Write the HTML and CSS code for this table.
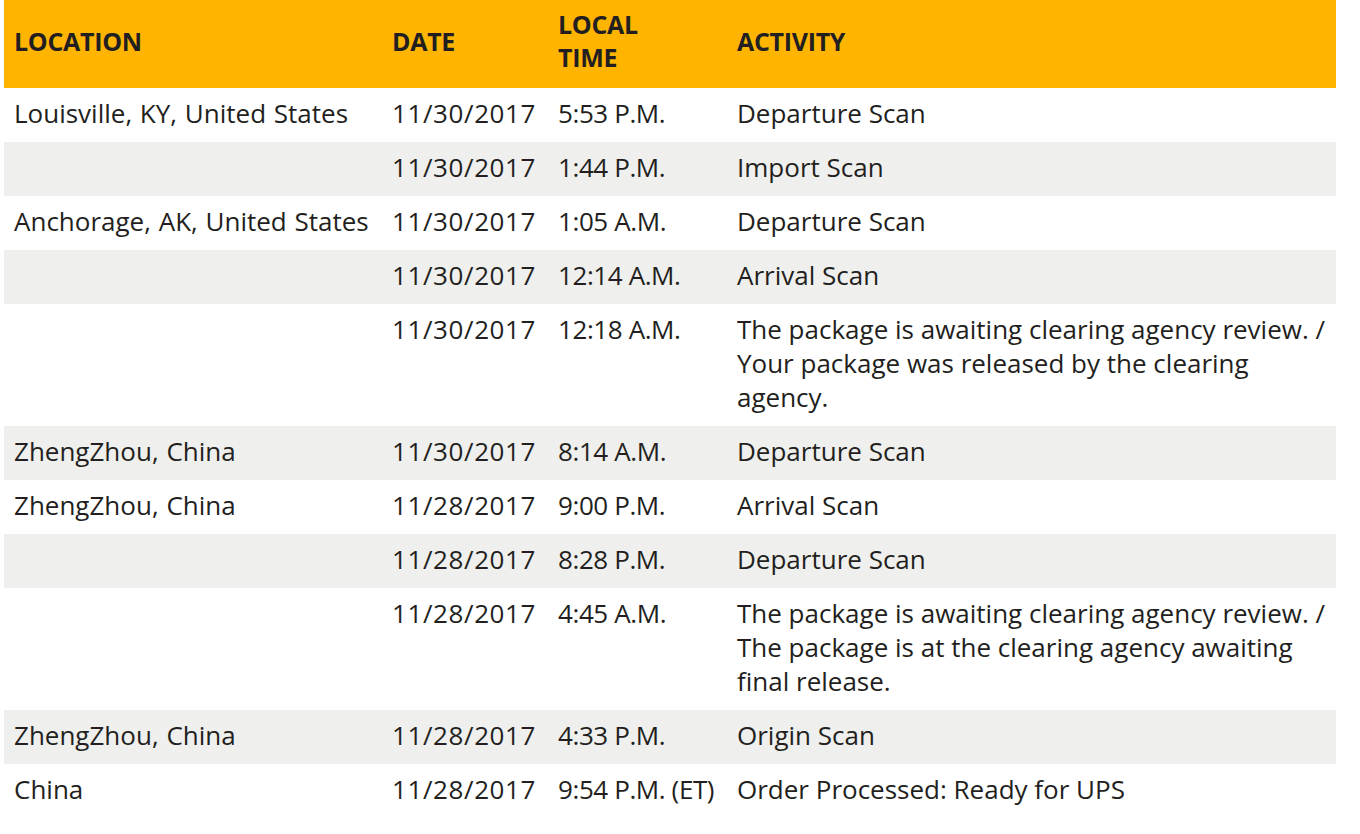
FILE: index.html
```html
<!DOCTYPE html>
<html lang="en">
<head>
<meta charset="utf-8">
<title>Shipment Progress</title>
<link rel="stylesheet" href="styles.css">
</head>
<body>
<table class="progress">
  <colgroup>
    <col class="c-loc"><col class="c-date"><col class="c-time"><col class="c-act">
  </colgroup>
  <thead>
    <tr>
      <th>LOCATION</th>
      <th>DATE</th>
      <th>LOCAL<br>TIME</th>
      <th>ACTIVITY</th>
    </tr>
  </thead>
  <tbody>
    <tr><td class="loc">Louisville, KY, United States</td><td class="date">11/30/2017</td><td class="time">5:53 P.M.</td><td>Departure Scan</td></tr>
    <tr><td class="loc"></td><td class="date">11/30/2017</td><td class="time">1:44 P.M.</td><td>Import Scan</td></tr>
    <tr><td class="loc">Anchorage, AK, United States</td><td class="date">11/30/2017</td><td class="time">1:05 A.M.</td><td>Departure Scan</td></tr>
    <tr><td class="loc"></td><td class="date">11/30/2017</td><td class="time">12:14 A.M.</td><td>Arrival Scan</td></tr>
    <tr><td class="loc"></td><td class="date">11/30/2017</td><td class="time">12:18 A.M.</td><td>The package is awaiting clearing agency review. / Your package was released by the clearing agency.</td></tr>
    <tr><td class="loc">ZhengZhou, China</td><td class="date">11/30/2017</td><td class="time">8:14 A.M.</td><td>Departure Scan</td></tr>
    <tr><td class="loc">ZhengZhou, China</td><td class="date">11/28/2017</td><td class="time">9:00 P.M.</td><td>Arrival Scan</td></tr>
    <tr><td class="loc"></td><td class="date">11/28/2017</td><td class="time">8:28 P.M.</td><td>Departure Scan</td></tr>
    <tr><td class="loc"></td><td class="date">11/28/2017</td><td class="time">4:45 A.M.</td><td>The package is awaiting clearing agency review. / The package is at the clearing agency awaiting final release.</td></tr>
    <tr><td class="loc">ZhengZhou, China</td><td class="date">11/28/2017</td><td class="time">4:33 P.M.</td><td>Origin Scan</td></tr>
    <tr><td class="loc">China</td><td class="date">11/28/2017</td><td class="time">9:54 P.M. (ET)</td><td>Order Processed: Ready for UPS</td></tr>
  </tbody>
</table>
</body>
</html>
```

FILE: styles.css
```css
html, body {
  margin: 0;
  padding: 0;
  background: #ffffff;
}

body {
  padding: 0 4px;
  font-family: "Open Sans", "Noto Sans", sans-serif;
  color: #231f20;
}

.progress {
  width: 1332px;
  border-collapse: collapse;
  table-layout: fixed;
  font-size: 26px;
  line-height: 34px;
}

.c-loc { width: 378px; }
.c-date { width: 166px; }
.c-time { width: 179px; }
.c-act { width: 609px; }

.progress th {
  background: #ffb500;
  height: 82px;
  padding: 0 10px 6px;
  text-align: left;
  vertical-align: middle;
  font-weight: 700;
  font-size: 25px;
  line-height: 33px;
  letter-spacing: -0.3px;
}

.progress td {
  padding: 8px 10px 12px;
  vertical-align: top;
  text-align: left;
  font-weight: 400;
}

.progress tbody tr:nth-child(even) td {
  background: #efefee;
}

.loc {
  word-spacing: 1px;
}

.date {
  letter-spacing: 0.6px;
}

.time {
  white-space: nowrap;
  letter-spacing: -0.4px;
}
```
